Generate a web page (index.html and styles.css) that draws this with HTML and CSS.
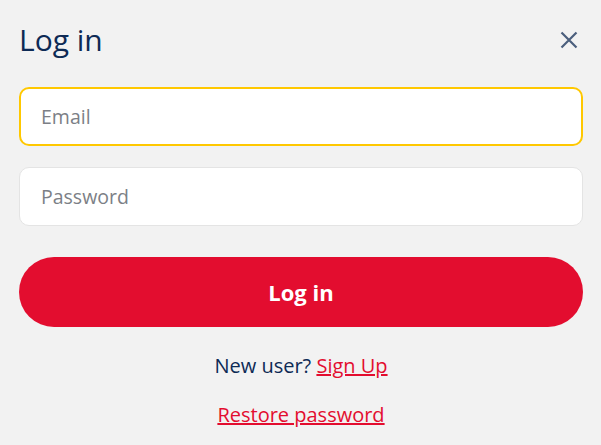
FILE: index.html
```html
<!DOCTYPE html>
<html lang="en">
<head>
<meta charset="utf-8">
<title>Log in</title>
<link rel="stylesheet" href="styles.css">
</head>
<body>
<div class="modal">
  <div class="header">
    <h1 class="title">Log in</h1>
    <button class="close" aria-label="Close">
      <svg width="18" height="18" viewBox="0 0 18 18"><path d="M1.5 1.5 L16.5 16.5 M16.5 1.5 L1.5 16.5" stroke="#4b5f7d" stroke-width="2.2" fill="none"/></svg>
    </button>
  </div>
  <form class="form">
    <input class="field field-focus" type="email" placeholder="Email">
    <input class="field" type="password" placeholder="Password">
    <button class="submit" type="button">Log in</button>
  </form>
  <p class="signup">New user? <a href="#" class="link">Sign Up</a></p>
  <p class="restore"><a href="#" class="link">Restore password</a></p>
</div>
</body>
</html>
```
FILE: styles.css
```css
html, body {
  margin: 0;
  padding: 0;
  background: #f2f2f2;
  font-family: "Open Sans", sans-serif;
}
.modal {
  padding: 17px 18px 0 19px;
}
.header {
  display: flex;
  justify-content: space-between;
  align-items: center;
  height: 45px;
}
.title {
  margin: 0;
  font-size: 30px;
  font-weight: 400;
  color: #0d2a55;
}
.close {
  border: 0;
  background: none;
  padding: 0;
  margin-right: 5px;
  width: 18px;
  height: 18px;
  display: flex;
}
.form {
  margin-top: 25px;
  display: flex;
  flex-direction: column;
}
.field {
  box-sizing: border-box;
  height: 59px;
  border: 1px solid #e4e4e4;
  border-radius: 10px;
  background: #fff;
  padding: 0 21px;
  font-family: "Open Sans", sans-serif;
  font-size: 19.5px;
  color: #333;
  outline: none;
}
.field::placeholder {
  color: #7c7f86;
}
.field + .field {
  margin-top: 21px;
}
.field-focus {
  border: 2px solid #ffc800;
  padding-left: 20px;
}
.submit {
  margin-top: 31px;
  height: 70px;
  border: 0;
  border-radius: 35px;
  background: #e30d2f;
  color: #fff;
  font-family: "Open Sans", sans-serif;
  font-weight: 700;
  font-size: 22px;
}
.signup, .restore {
  margin: 0;
  text-align: center;
  font-size: 20px;
  color: #0d2a55;
}
.signup {
  margin-top: 25px;
}
.restore {
  margin-top: 22px;
}
.link {
  color: #e30d2f;
  text-decoration: underline;
}
```
